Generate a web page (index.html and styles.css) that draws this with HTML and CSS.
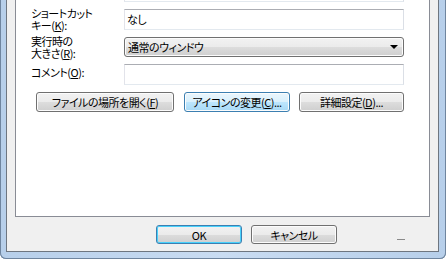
FILE: index.html
```html
<!DOCTYPE html>
<html lang="ja">

<head>
    <meta charset="UTF-8">
    <title>プロパティ</title>
    <link rel="stylesheet" href="styles.css">
</head>

<body>
    <div class="window">
        <div class="client">
            <div class="panel">
                <div class="row cut">
                    <div class="label"></div>
                    <div class="edit"></div>
                </div>
                <div class="row">
                    <div class="label">ショートカット<br>キー(<u>K</u>):</div>
                    <div class="edit">なし</div>
                </div>
                <div class="row combo-row">
                    <div class="label">実行時の<br>大きさ(<u>R</u>):</div>
                    <div class="combo">通常のウィンドウ<span class="arrow"></span></div>
                </div>
                <div class="row">
                    <div class="label single">コメント(<u>O</u>):</div>
                    <div class="edit"></div>
                </div>
                <div class="buttons">
                    <button class="btn btn-open">ファイルの場所を開く(<u>F</u>)</button>
                    <button class="btn hot btn-icon">アイコンの変更(<u>C</u>)...</button>
                    <button class="btn btn-adv">詳細設定(<u>D</u>)...</button>
                </div>
            </div>
            <div class="footer">
                <button class="btn default btn-ok">OK</button>
                <button class="btn btn-cancel">キャンセル</button>
                <span class="grip"></span>
            </div>
        </div>
    </div>
</body>

</html>
```

FILE: styles.css
```css
body {
    margin: 0;
    padding: 0;
    width: 446px;
    height: 259px;
    overflow: hidden;
    font-family: "Noto Sans CJK JP", sans-serif;
    font-size: 11px;
    letter-spacing: -0.5px;
    font-feature-settings: "palt";
    color: #000;
}

/* ------------------window frame------------------- */
.window {
    width: 446px;
    height: 259px;
    box-sizing: border-box;
    padding: 0 7px 7px 6px;
    background: linear-gradient(to right, #b7cfea, #c9dcf2 50%, #b7cfea);
    border-radius: 0 0 6px 6px;
    box-shadow: inset 1px 0 0 #6f859f, inset -1px 0 0 #6f859f, inset 0 -1px 0 #6f859f;
    display: flex;
}

.client {
    flex: 1;
    display: flex;
    flex-direction: column;
    background-color: #f0f0f0;
    border: 1px solid #6e7680;
    border-top: none;
}

/* ------------------tab panel------------------- */
.panel {
    height: 216px;
    margin: 0 8px;
    background-color: #fff;
    border: 1px solid #898c95;
    border-top: none;
}

.row {
    display: flex;
    height: 21px;
    margin-top: 7px;
    padding-left: 15px;
}

.row.cut {
    height: 2px;
    margin-top: 0;
    margin-bottom: 1px;
}

.row.cut .edit {
    border-top: none;
}

.combo-row {
    height: 20px;
}

.label {
    width: 93px;
    line-height: 12px;
    margin-top: -2px;
    white-space: nowrap;
}

.label.single {
    margin-top: 2px;
}

.edit {
    width: 280px;
    box-sizing: border-box;
    border: 1px solid;
    border-color: #abadb3 #dbdfe6 #e3e9ef #e2e3ea;
    padding: 0 2px;
    line-height: 19px;
}

.combo {
    position: relative;
    width: 280px;
    box-sizing: border-box;
    border: 1px solid #707070;
    border-radius: 3px;
    background: linear-gradient(#f2f2f2, #ebebeb 50%, #dddddd 50%, #cfcfcf);
    box-shadow: inset 0 0 0 1px #fcfcfc;
    padding: 0 3px;
    line-height: 18px;
}

.arrow {
    position: absolute;
    right: 5px;
    top: 7px;
    border-left: 4px solid transparent;
    border-right: 4px solid transparent;
    border-top: 4px solid #000;
}

/* ------------------buttons------------------- */
.buttons {
    display: flex;
    margin-top: 7px;
    padding-left: 20px;
}

.btn {
    height: 20px;
    box-sizing: border-box;
    padding: 0;
    font: inherit;
    letter-spacing: inherit;
    font-feature-settings: "palt";
    line-height: 16px;
    white-space: nowrap;
    color: #000;
    border: 1px solid #707070;
    border-radius: 3px;
    background: linear-gradient(#f2f2f2, #ebebeb 50%, #dddddd 50%, #cfcfcf);
    box-shadow: inset 0 0 0 1px #fcfcfc;
}

.btn.hot {
    border-color: #3c7fb1;
    background: linear-gradient(#eaf6fd, #d9f0fc 50%, #bee6fd 50%, #a7d9f5);
}

.btn.default {
    border-color: #3c7fb1;
    box-shadow: inset 0 0 0 1px #48d1fb;
}

.btn-open {
    width: 138px;
}

.btn-icon {
    width: 106px;
    margin-left: 10px;
}

.btn-adv {
    width: 105px;
    margin-left: 9px;
}

/* ------------------footer------------------- */
.footer {
    flex: 1;
    display: flex;
    align-items: flex-start;
    padding: 8px 0 0 149px;
}

.btn-ok,
.btn-cancel {
    width: 86px;
    height: 19px;
}

.btn-cancel {
    margin-left: 9px;
}

.grip {
    width: 8px;
    height: 1px;
    margin: 14px 0 0 60px;
    background-color: #8a8a8a;
}
```
